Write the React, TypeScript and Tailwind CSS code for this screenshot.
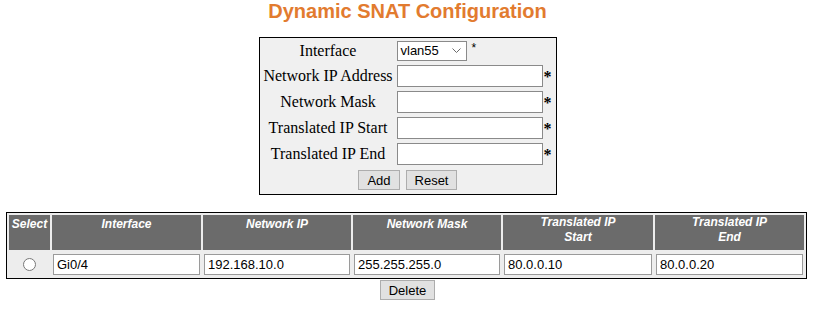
import React from 'react';

const rows = [
  { label: 'Network IP Address' },
  { label: 'Network Mask' },
  { label: 'Translated IP Start' },
  { label: 'Translated IP End' },
];

const entries = [
  { iface: 'Gi0/4', net: '192.168.10.0', mask: '255.255.255.0', start: '80.0.0.10', end: '80.0.0.20' },
];

function Btn({ label, w }: { label: string; w: string }) {
  return (
    <button
      type="button"
      className={`${w} h-[20px] border border-[#adadad] bg-[#e1e1e1] text-[13px] leading-none text-black font-['Liberation_Sans',Tahoma,sans-serif]`}
    >
      {label}
    </button>
  );
}

function Cell({ value }: { value: string }) {
  return (
    <td className="p-[1px]">
      <input
        readOnly
        value={value}
        className="block h-[21px] w-full border border-[#9a9a9a] bg-white px-[3px] text-[13px] text-black outline-none font-['Liberation_Sans',Tahoma,sans-serif]"
      />
    </td>
  );
}

export default function App() {
  return (
    <div className="w-[815px] h-[312px] bg-white overflow-hidden">
      {/* Title */}
      <h1 className="text-center text-[20px] leading-[23px] font-bold text-[#e27b2f] font-['Liberation_Sans',Arial,sans-serif]">
        Dynamic SNAT Configuration
      </h1>

      {/* Add form */}
      <div className="mx-auto mt-[14px] w-[298px] border border-black bg-[#f0f0f0] pt-[3px] pb-[4px] font-['Liberation_Serif','Times_New_Roman',serif] text-[16px] text-black">
        <div className="flex h-[20px] items-center">
          <span className="w-[137px] text-center">Interface</span>
          <div className="relative w-[70px] h-[20px] border border-[#8a8a8a] bg-white">
            <span className="absolute left-[3px] top-0 text-[13px] leading-[18px] font-['Liberation_Sans',Tahoma,sans-serif]">vlan55</span>
            <svg className="absolute right-[5px] top-[6px]" width="9" height="6" viewBox="0 0 9 6" fill="none">
              <polyline points="0.5,0.5 4.5,4.5 8.5,0.5" stroke="#6b6b6b" strokeWidth="1" />
            </svg>
          </div>
          <span className="ml-[5px] self-start text-[12px] leading-[14px] font-['Liberation_Sans',Tahoma,sans-serif]">*</span>
        </div>

        {rows.map((r) => (
          <div key={r.label} className="mt-[4px] flex h-[22px] items-center">
            <span className="w-[137px] text-center whitespace-nowrap">{r.label}</span>
            <input className="h-[22px] w-[146px] border border-[#8a8a8a] bg-white outline-none" />
            <span className="ml-[1px] self-start font-bold leading-normal">*</span>
          </div>
        ))}

        <div className="mt-[5px] flex justify-center gap-[6px]">
          <Btn label="Add" w="w-[42px]" />
          <Btn label="Reset" w="w-[51px]" />
        </div>
      </div>

      {/* Entry list */}
      <table className="ml-[6px] mt-[17px] w-[801px] table-fixed border-separate border-spacing-[2px] border border-black bg-[#ededed] font-['Liberation_Sans',Tahoma,sans-serif]">
        <colgroup>
          <col className="w-[41px]" />
          <col className="w-[149px]" />
          <col className="w-[148px]" />
          <col className="w-[148px]" />
          <col className="w-[150px]" />
          <col className="w-[149px]" />
        </colgroup>
        <thead>
          <tr className="h-[35px] bg-[#6b6b6b] text-[12px] font-bold italic text-white">
            <th className="p-0 pt-[2px] align-top leading-[15px]">Select</th>
            <th className="p-0 pt-[2px] align-top leading-[15px]">Interface</th>
            <th className="p-0 pt-[2px] align-top leading-[15px]">Network IP</th>
            <th className="p-0 pt-[2px] align-top leading-[15px]">Network Mask</th>
            <th className="p-0 align-top leading-[15px]">
              Translated IP
              <br />
              Start
            </th>
            <th className="p-0 align-top leading-[15px]">
              Translated IP
              <br />
              End
            </th>
          </tr>
        </thead>
        <tbody>
          {entries.map((e) => (
            <tr key={e.iface} className="h-[24px]">
              <td className="p-0 text-center align-middle">
                <input type="radio" name="sel" className="m-0 h-[13px] w-[13px] align-middle" />
              </td>
              <Cell value={e.iface} />
              <Cell value={e.net} />
              <Cell value={e.mask} />
              <Cell value={e.start} />
              <Cell value={e.end} />
            </tr>
          ))}
        </tbody>
      </table>

      <div className="mt-[1px] flex justify-center">
        <Btn label="Delete" w="w-[55px]" />
      </div>
    </div>
  );
}
